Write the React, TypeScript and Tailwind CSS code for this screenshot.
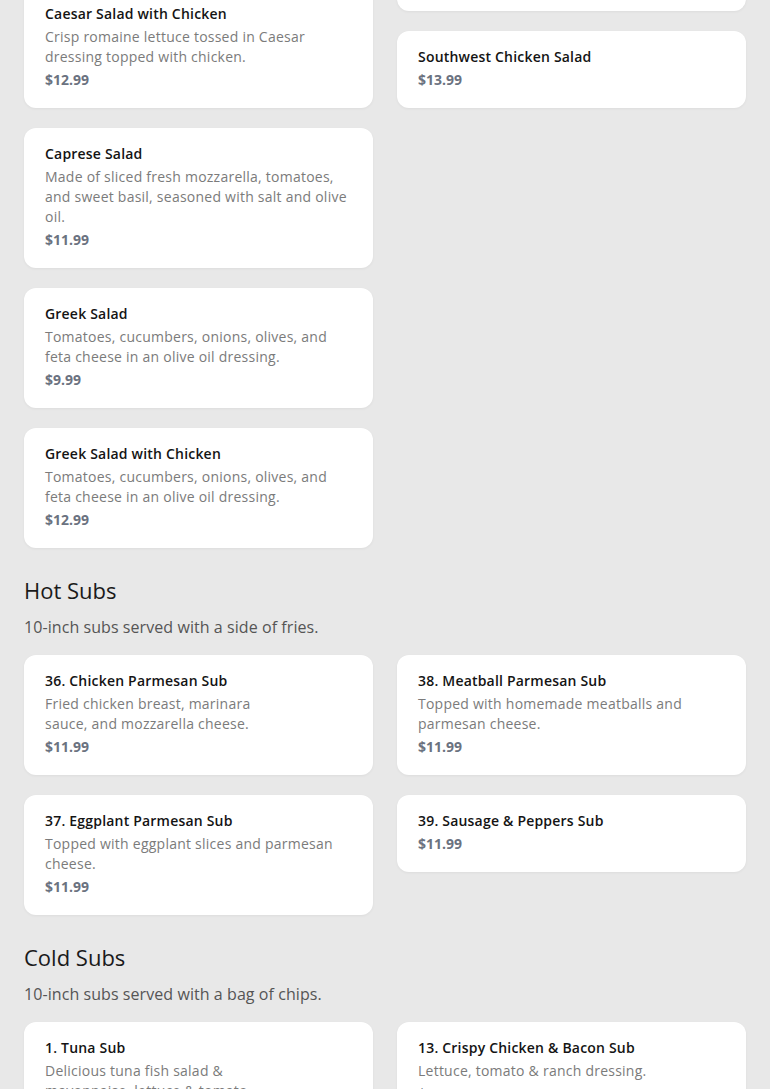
type Item = { name: string; desc?: string; price: string };

type Section = {
  title?: string;
  subtitle?: string;
  columns: Item[][];
};

const SECTIONS: Section[] = [
  {
    columns: [
      [
        { name: "Caesar Salad", price: "$10.99" },
        {
          name: "Caesar Salad with Chicken",
          desc: "Crisp romaine lettuce tossed in Caesar\ndressing topped with chicken.",
          price: "$12.99",
        },
        {
          name: "Caprese Salad",
          desc: "Made of sliced fresh mozzarella, tomatoes,\nand sweet basil, seasoned with salt and olive\noil.",
          price: "$11.99",
        },
        {
          name: "Greek Salad",
          desc: "Tomatoes, cucumbers, onions, olives, and\nfeta cheese in an olive oil dressing.",
          price: "$9.99",
        },
        {
          name: "Greek Salad with Chicken",
          desc: "Tomatoes, cucumbers, onions, olives, and\nfeta cheese in an olive oil dressing.",
          price: "$12.99",
        },
      ],
      [
        {
          name: "Garden Salad",
          desc: "Mixed greens, tomatoes, cucumbers, onions\nand carrots.",
          price: "$9.99",
        },
        { name: "Southwest Chicken Salad", price: "$13.99" },
      ],
    ],
  },
  {
    title: "Hot Subs",
    subtitle: "10-inch subs served with a side of fries.",
    columns: [
      [
        {
          name: "36. Chicken Parmesan Sub",
          desc: "Fried chicken breast, marinara\nsauce, and mozzarella cheese.",
          price: "$11.99",
        },
        {
          name: "37. Eggplant Parmesan Sub",
          desc: "Topped with eggplant slices and parmesan\ncheese.",
          price: "$11.99",
        },
      ],
      [
        {
          name: "38. Meatball Parmesan Sub",
          desc: "Topped with homemade meatballs and\nparmesan cheese.",
          price: "$11.99",
        },
        { name: "39. Sausage & Peppers Sub", price: "$11.99" },
      ],
    ],
  },
  {
    title: "Cold Subs",
    subtitle: "10-inch subs served with a bag of chips.",
    columns: [
      [
        {
          name: "1. Tuna Sub",
          desc: "Delicious tuna fish salad &\nmayonnaise, lettuce & tomato.",
          price: "$10.99",
        },
      ],
      [
        {
          name: "13. Crispy Chicken & Bacon Sub",
          desc: "Lettuce, tomato & ranch dressing.",
          price: "$12.99",
        },
      ],
    ],
  },
];

function MenuCard({ item }: { item: Item }) {
  return (
    <div className="rounded-xl bg-white px-[21px] pt-4 pb-[18px] shadow-[0_1px_3px_rgba(0,0,0,0.05)]">
      <div className="text-sm font-semibold leading-5 tracking-[0.2px] text-[#141414]">{item.name}</div>
      {item.desc && (
        <p className="mt-[3px] whitespace-pre-line text-sm leading-5 tracking-[0.24px] text-[#7b7b7b]">
          {item.desc}
        </p>
      )}
      <div className="mt-[3px] text-sm font-bold leading-5 text-[#6b7280]">{item.price}</div>
    </div>
  );
}

export default function App() {
  return (
    <div className="h-[1089px] overflow-hidden bg-[#e8e8e8] font-['Open_Sans',sans-serif]">
      <div className="-mt-[109px] flex flex-col px-6 pb-10">
        {SECTIONS.map((section, i) => (
          <section key={i} className={i > 0 ? "mt-[26px]" : ""}>
            {section.title && (
              <>
                <h2 className="text-[22px] leading-8 text-[#1a1a1a]">{section.title}</h2>
                <p className="mt-[9px] mb-4 text-base leading-6 tracking-[0.07px] text-[#555555]">
                  {section.subtitle}
                </p>
              </>
            )}
            <div className="grid grid-cols-2 gap-6">
              {section.columns.map((col, c) => (
                <div key={c} className="flex flex-col gap-5">
                  {col.map((item) => (
                    <MenuCard key={item.name} item={item} />
                  ))}
                </div>
              ))}
            </div>
          </section>
        ))}
      </div>
    </div>
  );
}
